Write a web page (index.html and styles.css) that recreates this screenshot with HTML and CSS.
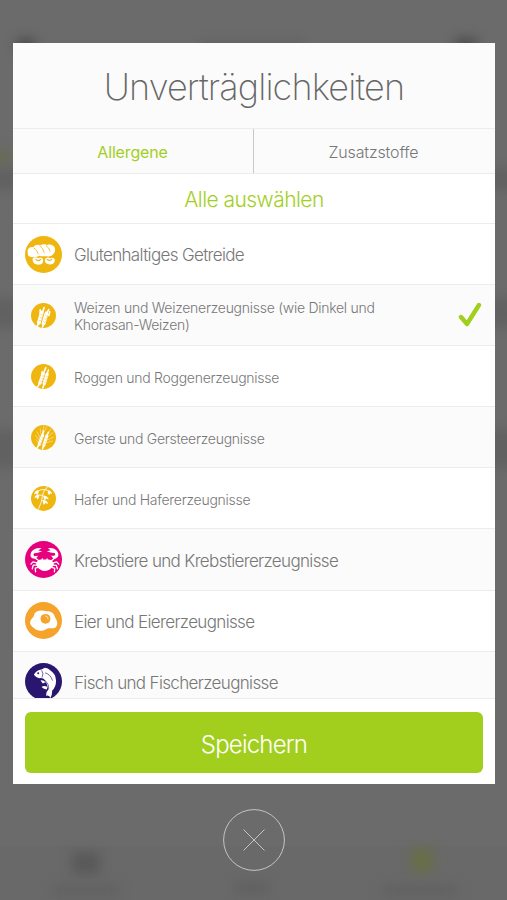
FILE: index.html
```html
<!DOCTYPE html>
<html lang="de">
<head>
    <meta charset="UTF-8">
    <meta name="viewport" content="width=device-width, initial-scale=1.0">
    <title>Unverträglichkeiten</title>
    <link rel="stylesheet" href="styles.css">
</head>
<body>
    <div class="backdrop" aria-hidden="true">
        <span class="smudge nav-left"></span>
        <span class="smudge nav-title"></span>
        <span class="smudge nav-right"></span>
        <span class="smudge band band-1"></span>
        <span class="smudge band band-2"></span>
        <span class="smudge band band-3"></span>
        <span class="smudge green"></span>
        <span class="tabbar"></span>
        <span class="smudge tab-icon-1"></span>
        <span class="smudge tab-label-1"></span>
        <span class="smudge tab-label-2"></span>
        <span class="smudge tab-icon-3"></span>
        <span class="smudge tab-label-3"></span>
    </div>
    <main class="modal">
        <header class="modal-header">
            <h1><span>Unverträglichkeiten</span></h1>
        </header>
        <nav class="tabs">
            <a class="tab active"><span>Allergene</span></a>
            <a class="tab"><span>Zusatzstoffe</span></a>
        </nav>
        <div class="select-all"><span>Alle auswählen</span></div>
        <ul class="list">
            <li class="row">
                <svg class="icon" viewBox="0 0 112 112">
                    <circle cx="56" cy="56" r="56" fill="#efb60f"/>
                    <path fill="#fff" d="M8 47C7 38 16 32 25 34C30 27 40 25 46 28C53 24 62 24 67 27C77 23 90 29 91 39C92 52 84 61 70 62C60 60 52 63 44 60C36 66 14 66 9 58Z"/>
                    <path fill="none" stroke="#efb60f" stroke-width="2.4" stroke-linecap="round" d="M27 36Q38 42 40 54M45 30Q56 37 58 50M64 29Q74 36 76 46"/>
                    <path fill="#fff" d="M23 73C21 64 33 62 40 67C47 62 55 67 55 73C55 84 50 87 40 87C30 87 24 83 23 73ZM60 73C60 66 70 62 77 67C86 63 92 70 90 76C88 84 83 86 75 86C66 86 60 82 60 73Z"/>
                    <path fill="none" stroke="#efb60f" stroke-width="3.5" stroke-linecap="round" d="M33 71Q39 78 47 71M67 71Q73 77 81 71"/>
                </svg>
                <span class="label">Glutenhaltiges Getreide</span>
            </li>
            <li class="row sub">
                <svg class="icon" viewBox="0 0 76 76">
                    <circle cx="38" cy="38" r="38" fill="#efb60f"/>
                    <g fill="none" stroke="#fff" stroke-linecap="round">
                        <path stroke-width="12" d="M33 29L24 60M47 32L38 62"/>
                        <path stroke-width="5" d="M35 29L40 14M47 32L54 20M24 57L19 72M38 63L35 73M28 35L28 21M54 38L57 27"/>
                    </g>
                    <path fill="none" stroke="#efb60f" stroke-width="1.4" d="M29 33L33 37L38 34M27 42L30 46L35 43M24 51L27 55L32 52M43 37L47 41L51 38M41 46L44 50L48 47M38 55L41 59L45 56M40 28L31 60"/>
                </svg>
                <span class="label">Weizen und Weizenerzeugnisse (wie Dinkel und<br>Khorasan-Weizen)</span>
                <svg class="check" viewBox="0 0 24 26">
                    <path d="M3 15L9 22L21 3"/>
                </svg>
            </li>
            <li class="row sub">
                <svg class="icon" viewBox="0 0 76 76">
                    <circle cx="38" cy="38" r="38" fill="#efb60f"/>
                    <g fill="none" stroke="#fff" stroke-linecap="round">
                        <path stroke-width="10" d="M37 30L27 58M49 31L40 60"/>
                        <path stroke-width="4.5" d="M38 29L45 11M49 30L53 18M27 57L20 70M40 60L36 73M32 33L34 23"/>
                    </g>
                    <path fill="none" stroke="#efb60f" stroke-width="1.3" d="M34 34L36 38L41 35M31 42L34 46L38 43M28 50L31 54L35 51M45 36L48 40L52 37M42 45L45 49L49 46M40 53L42 57L46 54"/>
                </svg>
                <span class="label">Roggen und Roggenerzeugnisse</span>
            </li>
            <li class="row sub">
                <svg class="icon" viewBox="0 0 76 76">
                    <circle cx="38" cy="38" r="38" fill="#efb60f"/>
                    <g fill="none" stroke="#fff" stroke-linecap="round">
                        <path stroke-width="9.5" d="M35 32L25 59M48 34L39 62"/>
                        <path stroke-width="1.3" d="M34 30L39 3M35 30L48 5M32 34L28 12M29 43L19 21M27 49L14 32M48 33L60 12M49 38L67 22M46 47L68 37M44 54L65 49M24 56L16 45"/>
                        <path stroke-width="4.5" d="M25 58L18 71M39 61L35 73M35 30L38 18M48 33L53 22"/>
                    </g>
                    <path fill="none" stroke="#efb60f" stroke-width="1.3" d="M32 36L35 40L39 37M29 44L32 48L36 45M26 52L29 56L33 53M44 39L47 43L51 40M41 48L44 52L48 49M39 56L41 59L45 57"/>
                </svg>
                <span class="label">Gerste und Gersteerzeugnisse</span>
            </li>
            <li class="row sub">
                <svg class="icon" viewBox="0 0 76 76">
                    <circle cx="38" cy="38" r="38" fill="#efb60f"/>
                    <path fill="none" stroke="#fff" stroke-width="2.5" d="M50 3Q37 14 35 29Q33 50 22 72M43 11Q29 9 20 16M42 12Q51 11 55 17M35 28Q26 27 19 29M35 29L45 35M33 43L43 46"/>
                    <path fill="#fff" d="M23 12Q12 13 9 26L16 22L18 28Q25 22 23 12ZM51 13Q49 22 55 28L58 22L64 25Q62 14 51 13ZM39 29Q36 37 42 44L46 38L54 41Q51 31 39 29ZM24 26Q14 26 10 36L17 35L19 41Q27 35 24 26ZM37 42Q33 50 39 58L44 52L52 55Q49 43 37 42Z"/>
                </svg>
                <span class="label">Hafer und Hafererzeugnisse</span>
            </li>
            <li class="row">
                <svg class="icon" viewBox="0 0 112 112">
                    <circle cx="56" cy="56" r="56" fill="#e6007e"/>
                    <path fill="#fff" d="M36 63Q43 54 50 56L52 51L55 56H64L67 51L69 56Q78 55 84 63Q90 68 85 76Q76 90 61 91Q45 90 37 78Q31 70 36 63Z"/>
                    <path fill="#fff" d="M50 22Q30 19 19 33Q12 48 24 53Q36 55 39 45L28 46Q24 41 27 37Q36 38 52 31L40 29ZM69 22Q89 18 99 33Q105 47 94 52Q84 55 79 45L89 45Q94 41 90 36Q80 37 66 31L78 28Z"/>
                    <g fill="none" stroke="#fff" stroke-width="4" stroke-linecap="round" stroke-linejoin="round">
                        <path d="M30 51L42 60M91 51L80 60M36 66L24 63L18 70M35 73L25 73L22 84M39 80L31 82L32 93M85 66L96 63L102 70M86 73L95 74L98 84M82 80L90 83L89 93"/>
                    </g>
                </svg>
                <span class="label">Krebstiere und Krebstiererzeugnisse</span>
            </li>
            <li class="row">
                <svg class="icon" viewBox="0 0 112 112">
                    <circle cx="56" cy="56" r="56" fill="#f6a32b"/>
                    <path fill="#fff" d="M29 35C35 24 52 24 65 28C80 27 88 35 91 46C96 55 101 65 95 74C88 84 76 76 66 81C54 90 37 89 27 79C21 73 13 68 16 59C19 50 26 49 29 35Z"/>
                    <circle cx="62" cy="51" r="15" fill="#f6a32b"/>
                    <path fill="none" stroke="#fff" stroke-width="2" stroke-linecap="round" d="M62 42Q70 43 70 51"/>
                </svg>
                <span class="label">Eier und Eiererzeugnisse</span>
            </li>
            <li class="row">
                <svg class="icon" viewBox="0 0 112 112">
                    <circle cx="56" cy="56" r="56" fill="#29166f"/>
                    <path fill="#fff" d="M27 35Q35 21 50 20L60 14Q70 15 76 22Q93 32 94 54Q94 73 82 84Q83 95 77 106Q74 96 64 99Q63 88 72 79Q67 72 66 63Q61 61 62 53Q54 44 44 46Q33 45 27 35Z"/>
                    <path fill="#fff" d="M47 53Q55 50 62 58L54 62ZM50 73Q58 66 68 73L66 80Q57 80 50 73Z"/>
                    <path fill="none" stroke="#29166f" stroke-width="2" stroke-linecap="round" d="M51 23Q58 32 52 43M64 56Q72 64 72 76M62 30Q78 35 83 52"/>
                    <circle cx="40" cy="31" r="3" fill="#29166f"/>
                </svg>
                <span class="label">Fisch und Fischerzeugnisse</span>
            </li>
        </ul>
        <footer class="modal-footer">
            <button class="save"><span>Speichern</span></button>
        </footer>
    </main>
    <button class="close" aria-label="Schließen">
        <svg viewBox="0 0 62 62">
            <circle cx="31" cy="31" r="30.4"/>
            <path d="M20.5 20.5L41.5 41.5M41.5 20.5L20.5 41.5"/>
        </svg>
    </button>
</body>
</html>
```
FILE: styles.css
```css
:root {
    --green: #a2cf1e;
    --text: #777;
    --line: #ececec;
    --stripe: #fbfbfb;
}
* {
    box-sizing: border-box;
}
body {
    margin: 0;
    height: 900px;
    padding-top: 43px;
    overflow: hidden;
    position: relative;
    display: flex;
    flex-direction: column;
    align-items: center;
    background: #6b6b6b;
    color: var(--text);
    font-family: Inter, "Liberation Sans", Arial, sans-serif;
    font-weight: 300;
}

/* dimmed, out of focus page behind the modal */
.backdrop {
    position: absolute;
    inset: 0;
    overflow: hidden;
}
.backdrop span {
    position: absolute;
}
.smudge {
    background: #5d5d5d;
    filter: blur(6px);
}
.nav-left { left: 17px; top: 39px; width: 18px; height: 14px; background: #484848; }
.nav-title { left: 200px; top: 43px; width: 105px; height: 12px; }
.nav-right { left: 455px; top: 38px; width: 22px; height: 14px; background: #4c4c4c; }
.band { left: -10px; width: 530px; height: 22px; background: #616161; }
.band-1 { top: 168px; }
.band-2 { top: 298px; height: 30px; }
.band-3 { top: 430px; height: 38px; }
.green { left: -8px; top: 151px; width: 18px; height: 12px; background: #656b50; }
.tabbar { left: 0; top: 846px; width: 100%; height: 54px; background: #696969; }
.tab-icon-1 { left: 72px; top: 852px; width: 28px; height: 22px; background: #595959; }
.tab-label-1 { left: 52px; top: 886px; width: 68px; height: 9px; background: #606060; }
.tab-label-2 { left: 236px; top: 882px; width: 32px; height: 12px; background: #606060; }
.tab-icon-3 { left: 411px; top: 848px; width: 22px; height: 24px; background: #676e46; }
.tab-label-3 { left: 382px; top: 886px; width: 76px; height: 9px; background: #606060; }

.modal {
    position: relative;
    display: flex;
    flex-direction: column;
    width: 482px;
    height: 741px;
    margin-left: 1px;
    background: #fff;
}
.modal-header {
    height: 86px;
    padding-top: 2px;
    display: flex;
    align-items: center;
    justify-content: center;
    background: var(--stripe);
    border-bottom: 1px solid var(--line);
}
h1 {
    margin: 0;
    font-size: 36px;
    font-weight: 200;
    letter-spacing: -0.85px;
    color: #666;
}
.tabs {
    display: flex;
    height: 45px;
    background: var(--stripe);
    border-bottom: 1px solid var(--line);
}
.tab {
    flex: 1;
    display: flex;
    align-items: center;
    justify-content: center;
    padding: 2px 2px 0 0;
    font-size: 16px;
    letter-spacing: -0.15px;
}
.tab:first-child {
    flex: 0 0 240px;
    padding-right: 1px;
}
.tab + .tab {
    border-left: 1px solid #c8c8c8;
}
.tab.active {
    color: var(--green);
    font-weight: 400;
}
.select-all {
    height: 50px;
    display: flex;
    align-items: center;
    justify-content: center;
    padding-top: 1px;
    font-size: 21px;
    letter-spacing: -0.55px;
    color: var(--green);
    border-bottom: 1px solid var(--line);
}
.list {
    flex: 1;
    min-height: 0;
    margin: 0;
    padding: 0;
    overflow: hidden;
    list-style: none;
    border-bottom: 1px solid var(--line);
}
.row {
    display: flex;
    align-items: center;
    height: 61.1px;
    padding: 0 12px;
    border-bottom: 1px solid var(--line);
}
.row:nth-child(even) {
    background: var(--stripe);
}
.icon {
    width: 37px;
    height: 37px;
    margin-right: 12px;
    flex: none;
}
.label {
    flex: 1;
    padding-top: 2px;
    font-size: 17px;
    letter-spacing: -0.65px;
    white-space: nowrap;
}
.sub .icon {
    width: 25px;
    height: 25px;
    margin: 0 18px 0 6px;
}
.sub .label {
    font-size: 14px;
    line-height: 17px;
    letter-spacing: -0.27px;
}
.check {
    width: 24px;
    height: 26px;
    margin-right: 1px;
    flex: none;
}
.check path {
    fill: none;
    stroke: var(--green);
    stroke-width: 4.4;
    stroke-linecap: round;
    stroke-linejoin: round;
}
.modal-footer {
    padding: 13px 12px 11px;
}
.save {
    display: block;
    width: 100%;
    height: 61px;
    padding: 3px 0 0;
    border: 0;
    border-radius: 6px;
    background: var(--green);
    color: #fff;
    font: inherit;
    font-size: 24px;
    letter-spacing: -0.8px;
}
.close {
    position: relative;
    width: 62px;
    height: 62px;
    margin: 25px 0 0 1px;
    padding: 0;
    border: 0;
    background: none;
}
.close svg {
    display: block;
    fill: none;
    stroke: #c4c4c4;
    stroke-width: 1;
}
```
